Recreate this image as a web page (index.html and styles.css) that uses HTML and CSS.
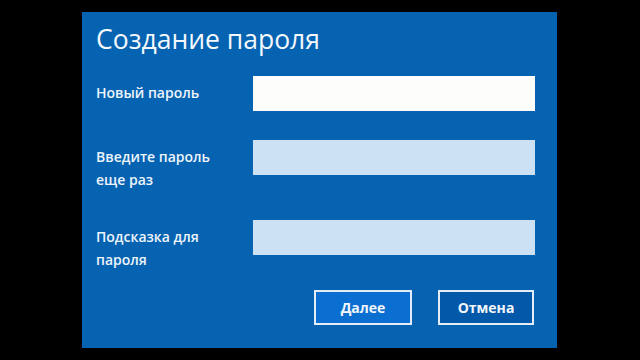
FILE: index.html
```html
<!DOCTYPE html>
<html lang="ru">
<head>
<meta charset="utf-8">
<title>Создание пароля</title>
<link rel="stylesheet" href="styles.css">
</head>
<body>
<div class="screen">
  <div class="panel">
    <h1 class="title">Создание пароля</h1>
    <div class="form">
      <label class="label" for="p1">Новый пароль</label>
      <input class="field field-active" id="p1" type="password">
      <label class="label" for="p2">Введите пароль<br>еще раз</label>
      <input class="field" id="p2" type="password">
      <label class="label" for="p3">Подсказка для<br>пароля</label>
      <input class="field" id="p3" type="text">
    </div>
    <div class="actions">
      <button class="btn btn-primary" type="button">Далее</button>
      <button class="btn btn-secondary" type="button">Отмена</button>
    </div>
  </div>
</div>
</body>
</html>
```
FILE: styles.css
```css
html, body {
  margin: 0;
  padding: 0;
  background: #000;
}
.screen {
  width: 640px;
  height: 360px;
  background: #000;
  overflow: hidden;
  padding-top: 12px;
  padding-left: 82px;
  box-sizing: border-box;
}
.panel {
  width: 475px;
  height: 336px;
  background: #0563b1;
  box-sizing: border-box;
  padding: 10px 22px 0 14px;
  font-family: "Open Sans", "Noto Sans", sans-serif;
  color: #fff;
}
.title {
  margin: 0 0 20px 0;
  font-size: 26.5px;
  line-height: 34px;
  font-weight: 400;
  color: #f4f8fc;
}
.form {
  display: grid;
  grid-template-columns: 157px 282px;
  row-gap: 29px;
}
.label {
  padding-top: 6px;
  font-size: 14px;
  line-height: 22.5px;
  font-weight: 600;
  color: #eef4fb;
}
.field {
  display: block;
  width: 282px;
  height: 35px;
  border: none;
  margin: 0;
  padding: 0;
  background: #cde1f5;
  box-sizing: border-box;
}
.field-active {
  background: #fdfdfc;
}
.actions {
  display: flex;
  justify-content: flex-end;
  gap: 26px;
  margin-top: 19px;
  padding-right: 1px;
}
.btn {
  height: 35px;
  border: 2px solid #e3ecf7;
  font-family: "Open Sans", "Noto Sans", sans-serif;
  font-size: 14px;
  font-weight: 700;
  color: #f2f6fb;
  padding: 0;
  box-sizing: border-box;
}
.btn-primary {
  width: 98px;
  background: #0a6fd0;
}
.btn-secondary {
  width: 96px;
  background: #0458aa;
}
```
